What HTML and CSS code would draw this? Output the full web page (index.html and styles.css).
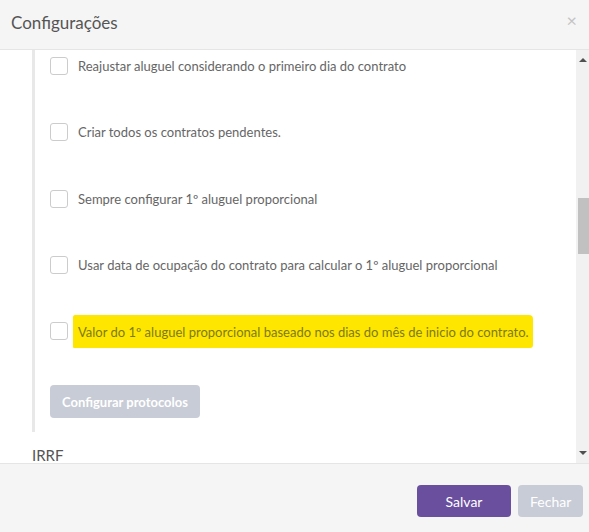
FILE: index.html
```html
<!DOCTYPE html>
<html lang="pt">
<head>
  <meta charset="UTF-8">
  <title>Configurações</title>
  <link rel="stylesheet" href="styles.css">
</head>
<body>
  <div class="modal">
    <div class="modal-header">
      <h4 class="modal-title">Configurações</h4>
      <span class="close">×</span>
    </div>

    <div class="modal-body">
      <div class="body-scroll">
        <div class="group">
          <label class="check-row"><span class="box"></span>Reajustar aluguel considerando o primeiro dia do contrato</label>
          <label class="check-row"><span class="box"></span>Criar todos os contratos pendentes.</label>
          <label class="check-row"><span class="box"></span>Sempre configurar 1º aluguel proporcional</label>
          <label class="check-row"><span class="box"></span>Usar data de ocupação do contrato para calcular o 1º aluguel proporcional</label>
          <label class="check-row"><span class="box"></span><span class="marker">Valor do 1º aluguel proporcional baseado nos dias do mês de inicio do contrato.</span></label>
          <button class="btn btn-muted btn-protocolos" type="button">Configurar protocolos</button>
        </div>
        <div class="section-title">IRRF</div>
      </div>
      <div class="scrollbar">
        <span class="arrow up"></span>
        <div class="track"><div class="thumb"></div></div>
        <span class="arrow down"></span>
      </div>
    </div>

    <div class="modal-footer">
      <button class="btn btn-primary" type="button">Salvar</button>
      <button class="btn btn-muted" type="button">Fechar</button>
    </div>
  </div>
</body>
</html>
```

FILE: styles.css
```css
body {
  margin: 0;
  font-family: Lato, 'Open Sans', Arial, sans-serif;
  background: #fff;
}
.modal {
  width: 589px;
  height: 532px;
  display: flex;
  flex-direction: column;
  overflow: hidden;
}
.modal-header {
  height: 49px;
  background: #f5f5f5;
  border-bottom: 1px solid #e5e5e5;
  display: flex;
  align-items: center;
  justify-content: space-between;
  padding: 0 11px;
}
.modal-title {
  margin: 0 0 4px 0;
  font-weight: 400;
  font-size: 17px;
  color: #555;
}
.close { color: #c4c4c4; font-size: 18px; margin: 0 1px 9px 0; }

.modal-body {
  height: 413px;
  display: flex;
  background: #fff;
}
.body-scroll {
  flex: 1;
  overflow: hidden;
  padding-left: 32px;
}
.group {
  border-left: 3px solid #e8e8e8;
  padding: 7px 0 14px 15px;
  display: flex;
  flex-direction: column;
  align-items: flex-start;
  gap: 48.3px;
}
.check-row {
  display: flex;
  align-items: center;
  height: 18px;
  font-size: 13px;
  color: #666;
  white-space: nowrap;
}
.box {
  width: 16px; height: 16px;
  border: 1px solid #ccc;
  border-radius: 3px;
  margin-right: 10px;
  flex: none;
}
.marker {
  background: #ffe600;
  color: #7d7a14;
  padding: 9px 4px 8px 5px;
  margin-left: -5px;
  border-radius: 2px 4px 3px 1px;
}
.btn {
  font-family: inherit;
  font-size: 14px;
  color: #fff;
  border: none;
  border-radius: 4px;
  height: 33px;
  padding: 0 12px;
}
.btn-muted { background: #c8ccd6; }
.btn-primary { background: #6a4f9f; }
.btn-protocolos { margin-top: -3px; font-size: 13px; font-weight: 700; }
.section-title {
  font-size: 15px;
  color: #555;
  margin-top: 14px;
}

.scrollbar {
  width: 13px;
  background: #f1f1f1;
  display: flex;
  flex-direction: column;
  align-items: center;
}
.arrow {
  width: 0; height: 0;
  border-left: 4px solid transparent;
  border-right: 4px solid transparent;
  margin: 8px 0;
}
.arrow.up { border-bottom: 4px solid #505050; }
.arrow.down { border-top: 4px solid #505050; }
.track { flex: 1; width: 100%; display: flex; justify-content: flex-end; }
.thumb { width: 11px; height: 56px; background: #c1c1c1; margin-top: 128px; }

.modal-footer {
  flex: 1;
  background: #f5f5f5;
  border-top: 1px solid #e5e5e5;
  display: flex;
  justify-content: flex-end;
  align-items: flex-start;
  gap: 7px;
  padding: 21px 6px 0 0;
}
.modal-footer .btn { height: 32px; }
.modal-footer .btn-primary { width: 94px; }
.modal-footer .btn-muted { width: 65px; }
```
